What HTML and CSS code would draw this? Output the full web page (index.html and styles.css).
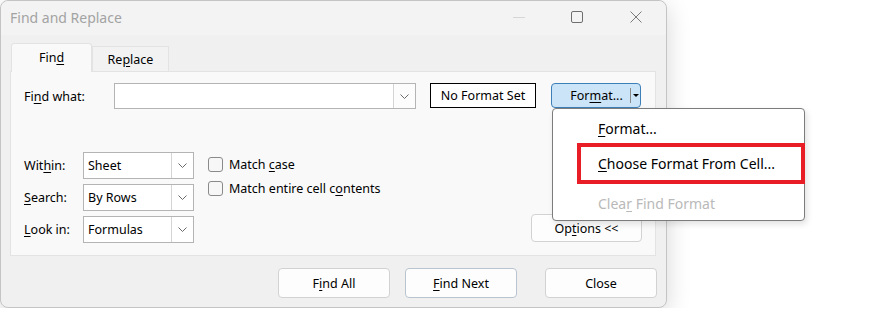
FILE: index.html
```html
<!DOCTYPE html>
<html lang="en">
<head>
    <meta charset="UTF-8">
    <title>Find and Replace</title>
    <link rel="stylesheet" href="styles.css">
</head>
<body>

    <div class="window">
        <div class="titlebar">
            <span class="title">Find and Replace</span>
            <div class="controls">
                <svg class="ctl ctl-min" width="12" height="12" viewBox="0 0 12 12"><path d="M0 6.5 H12" stroke="#d6d6d6" stroke-width="1"/></svg>
                <svg class="ctl ctl-max" width="12" height="12" viewBox="0 0 12 12"><rect x="0.5" y="0.5" width="11" height="11" rx="1.5" fill="none" stroke="#6e6e6e" stroke-width="1"/></svg>
                <svg class="ctl ctl-close" width="12" height="12" viewBox="0 0 12 12"><path d="M0.5 0.5 L11.5 11.5 M11.5 0.5 L0.5 11.5" stroke="#7a7a7a" stroke-width="1"/></svg>
            </div>
        </div>

        <div class="content">
            <div class="tabs">
                <div class="tab active"><span>Fin<u>d</u></span></div>
                <div class="tab"><span>Re<u>p</u>lace</span></div>
            </div>

            <div class="panel">
                <div class="find-row">
                    <label class="lbl find-lbl"><span>Fi<u>n</u>d what:</span></label>
                    <div class="combo">
                        <div class="combo-field"></div>
                        <div class="combo-arrow">
                            <svg width="9" height="5" viewBox="0 0 9 5"><path d="M0.5 0.5 L4.5 4.5 L8.5 0.5" fill="none" stroke="#6a6a6a"/></svg>
                        </div>
                    </div>
                    <div class="preview">No Format Set</div>
                    <div class="format-wrap">
                        <div class="format-btn">
                            <span class="format-text">For<u>m</u>at...</span>
                            <span class="split-line"></span>
                            <span class="split-arrow"></span>
                        </div>

                        <div class="menu">
                            <div class="menu-item"><span><u>F</u>ormat...</span></div>
                            <div class="menu-item"><span><u>C</u>hoose Format From Cell...</span></div>
                            <div class="menu-item disabled"><span>Clea<u>r</u> Find Format</span></div>
                            <div class="highlight"></div>
                        </div>
                    </div>
                </div>

                <div class="options">
                    <div class="selects">
                        <label class="lbl"><span>Wit<u>h</u>in:</span></label>
                        <div class="select">
                            <span class="select-value">Sheet</span>
                            <span class="select-arrow"><svg width="9" height="5" viewBox="0 0 9 5"><path d="M0.5 0.5 L4.5 4.5 L8.5 0.5" fill="none" stroke="#6a6a6a"/></svg></span>
                        </div>
                        <label class="lbl"><span><u>S</u>earch:</span></label>
                        <div class="select">
                            <span class="select-value">By Rows</span>
                            <span class="select-arrow"><svg width="9" height="5" viewBox="0 0 9 5"><path d="M0.5 0.5 L4.5 4.5 L8.5 0.5" fill="none" stroke="#6a6a6a"/></svg></span>
                        </div>
                        <label class="lbl"><span><u>L</u>ook in:</span></label>
                        <div class="select">
                            <span class="select-value">Formulas</span>
                            <span class="select-arrow"><svg width="9" height="5" viewBox="0 0 9 5"><path d="M0.5 0.5 L4.5 4.5 L8.5 0.5" fill="none" stroke="#6a6a6a"/></svg></span>
                        </div>
                    </div>

                    <div class="checks">
                        <div class="check"><span class="box"></span><span>Match <u>c</u>ase</span></div>
                        <div class="check"><span class="box"></span><span>Match entire cell c<u>o</u>ntents</span></div>
                    </div>

                    <button class="btn options-btn">Op<u>t</u>ions &lt;&lt;</button>
                </div>
            </div>

            <div class="actions">
                <button class="btn">F<u>i</u>nd All</button>
                <button class="btn default"><u>F</u>ind Next</button>
                <button class="btn close-btn">Close</button>
            </div>
        </div>
    </div>

</body>
</html>
```

FILE: styles.css
```css
body {
    margin: 0;
    padding: 0;
    background: #ffffff;
    font-family: "Noto Sans", "Open Sans", sans-serif;
    font-size: 12.5px;
    color: #000;
}

u {
    text-decoration-thickness: 1px;
    text-underline-offset: 2px;
}

.window {
    box-sizing: border-box;
    width: 667px;
    height: 308px;
    background: #f0f0f0;
    border: 1px solid #c4c4c4;
    border-radius: 8px;
    box-shadow: 0 6px 24px rgba(0, 0, 0, 0.16);
}

.titlebar {
    height: 34px;
    display: flex;
    align-items: center;
    background: #f3f3f3;
    border-radius: 8px 8px 0 0;
}

.title {
    margin-left: 9px;
    font-size: 14px;
    color: #a3a3a3;
    margin-top: -1px;
}

.controls {
    margin-left: auto;
    display: flex;
    align-items: center;
    margin-right: 24px;
    margin-top: -3px;
}

.ctl-min {
    margin-right: 46px;
}

.ctl-max {
    margin-right: 47px;
}

.content {
    padding: 9px 9px 0 9px;
}

.tabs {
    display: flex;
    align-items: flex-end;
    height: 28px;
    margin-bottom: -1px;
    position: relative;
    z-index: 1;
}

.tab {
    box-sizing: border-box;
    height: 25px;
    width: 77px;
    display: flex;
    align-items: center;
    justify-content: center;
    border: 1px solid #e3e3e3;
    border-bottom: none;
    background: #f2f2f2;
    margin-bottom: 1px;
    padding-top: 1px;
}

.tab.active {
    width: 81px;
    height: 29px;
    margin-left: 1px;
    margin-bottom: 0;
    background: #f9f9f9;
    border-radius: 3px 3px 0 0;
    padding-top: 0;
    padding-bottom: 1px;
}

.panel {
    box-sizing: border-box;
    width: 646px;
    height: 185px;
    background: #f9f9f9;
    border: 1px solid #e3e3e3;
    padding: 11px 13px 11px 13px;
    display: flex;
    flex-direction: column;
}

.find-row {
    display: flex;
    align-items: flex-start;
    height: 26px;
}

.lbl {
    display: flex;
    align-items: center;
}

.find-lbl {
    width: 90px;
    height: 26px;
}

.combo {
    box-sizing: border-box;
    width: 302px;
    height: 26px;
    display: flex;
    background: #fff;
    border: 1px solid #b4b4b4;
}

.combo-field {
    flex: 1;
}

.combo-arrow {
    width: 21px;
    border-left: 1px solid #d4d4d4;
    display: flex;
    align-items: center;
    justify-content: center;
    background: #fcfcfc;
}

.preview {
    box-sizing: border-box;
    width: 106px;
    height: 25px;
    margin-left: 14px;
    border: 1px solid #000;
    background: #fff;
    display: flex;
    align-items: center;
    justify-content: center;
}

.format-wrap {
    position: relative;
    margin-left: 15px;
}

.format-btn {
    box-sizing: border-box;
    width: 90px;
    height: 25px;
    background: #cce4f7;
    border: 1px solid #3d7fb8;
    border-radius: 4px;
    display: flex;
    align-items: center;
}

.format-text {
    box-sizing: border-box;
    width: 78px;
    padding-left: 11px;
    text-align: center;
}

.split-line {
    width: 1px;
    height: 15px;
    background: #8a8a8a;
}

.split-arrow {
    width: 0;
    height: 0;
    border-left: 3px solid transparent;
    border-right: 3px solid transparent;
    border-top: 3px solid #000;
    margin-left: 2px;
}

.menu {
    position: absolute;
    top: 25px;
    left: 1px;
    box-sizing: border-box;
    width: 253px;
    height: 113px;
    background: #fff;
    border: 1px solid #7c7c7c;
    border-radius: 4px;
    box-shadow: 2px 3px 6px rgba(0, 0, 0, 0.12);
    font-size: 14px;
    padding-top: 2px;
    z-index: 5;
}

.menu-item {
    height: 35px;
    display: flex;
    align-items: center;
    padding-left: 45px;
}

.menu-item.disabled {
    color: #b9b9b9;
    margin-top: 5px;
}

.highlight {
    position: absolute;
    left: 24px;
    top: 34px;
    width: 228px;
    height: 41px;
    box-sizing: border-box;
    border: 4px solid #e81d25;
}

.options {
    display: flex;
    margin-top: 43px;
}

.selects {
    display: grid;
    grid-template-columns: 59px 111px;
    grid-auto-rows: 27px;
    row-gap: 5px;
}

.select {
    box-sizing: border-box;
    height: 27px;
    display: flex;
    background: #fff;
    border: 1px solid #b4b4b4;
}

.select-value {
    flex: 1;
    display: flex;
    align-items: center;
    padding-left: 4px;
}

.select-arrow {
    width: 21px;
    border-left: 1px solid #d4d4d4;
    display: flex;
    align-items: center;
    justify-content: center;
}

.checks {
    margin-left: 14px;
    margin-top: 3px;
    display: flex;
    flex-direction: column;
    gap: 5px;
}

.check {
    display: flex;
    align-items: center;
    height: 19px;
}

.box {
    box-sizing: border-box;
    width: 15px;
    height: 15px;
    border: 1px solid #8a8a8a;
    border-radius: 3px;
    background: #f7f7f7;
    margin-right: 6px;
}

.btn {
    box-sizing: border-box;
    font-family: inherit;
    font-size: 12.5px;
    color: #000;
    background: #fdfdfd;
    border: 1px solid #d2d2d2;
    border-radius: 4px;
    padding: 0;
    cursor: default;
}

.options-btn {
    width: 111px;
    height: 28px;
    margin-left: auto;
    align-self: flex-end;
    margin-bottom: 1px;
}

.actions {
    display: flex;
    justify-content: flex-end;
    margin-top: 12px;
}

.actions .btn {
    width: 112px;
    height: 30px;
}

.actions .default {
    margin-left: 15px;
    border-color: #b9c4d0;
}

.actions .close-btn {
    margin-left: 28px;
}
```
